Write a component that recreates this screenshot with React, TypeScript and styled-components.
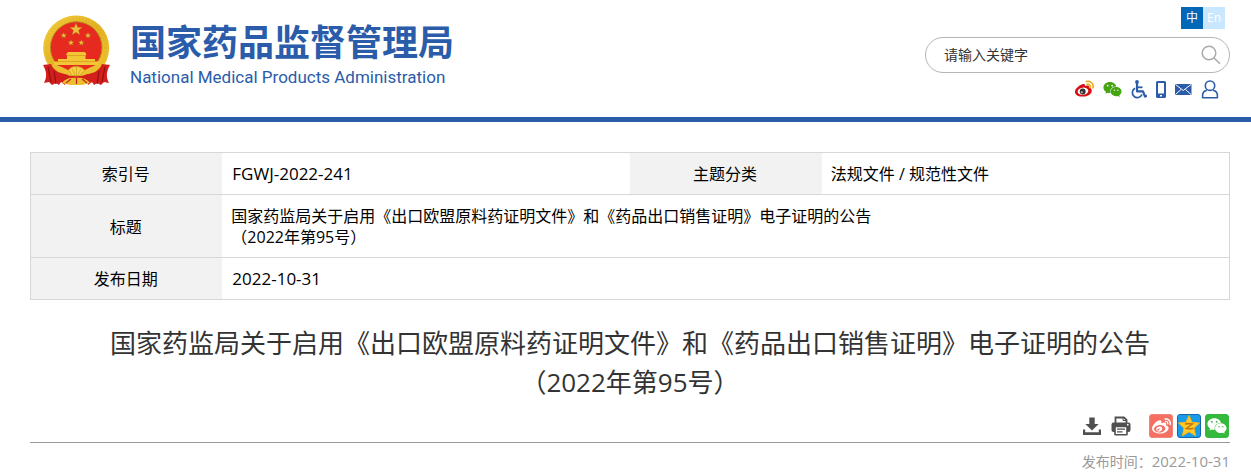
import React from "react";
import styled, { createGlobalStyle } from "styled-components";
import { FaWeibo, FaWeixin } from "react-icons/fa";

const blue = "#2a5caa";
const cjk = '"Noto Sans CJK SC", sans-serif';

const GlobalStyle = createGlobalStyle`
  * { box-sizing: border-box; }
  body {
    margin: 0;
    background: #fff;
    color: #000;
    font: 16px/21px "Open Sans", ${cjk};
  }
  a { color: inherit; text-decoration: none; }
  svg { display: block; }
`;

const Header = styled.header`
  display: flex;
  justify-content: space-between;
  align-items: flex-start;
  min-height: 122px;
  padding: 7px 21px 0 42px;
  border-bottom: 5px solid ${blue};
`;

const Brand = styled.a`
  display: flex;
  gap: 19px;
  padding-top: 7px;
  color: ${blue};
`;

const BrandText = styled.div`
  display: flex;
  flex-direction: column;
`;

const BrandName = styled.span`
  font: bold 36px/52px ${cjk};
  white-space: nowrap;
`;

const BrandSub = styled.span`
  font: 17px/22px Roboto, sans-serif;
  white-space: nowrap;
`;

const Tools = styled.div`
  display: flex;
  flex-direction: column;
  align-items: flex-end;
  width: 305px;
`;

const Languages = styled.nav`
  display: flex;
  margin-right: 5px;
`;

const Language = styled.a<{ $active?: boolean }>`
  width: 22px;
  height: 22px;
  font-size: 12px;
  line-height: 22px;
  text-align: center;
  color: #fff;
  background: ${(p) => (p.$active ? "#0068b7" : "#c9e7ff")};
`;

const Search = styled.form`
  display: flex;
  align-items: center;
  width: 100%;
  height: 36px;
  margin-top: 8px;
  padding: 0 8px 0 18px;
  border: 1px solid #b5b5b5;
  border-radius: 18px;
`;

const SearchInput = styled.input`
  flex: 1;
  min-width: 0;
  padding: 0;
  border: 0;
  outline: 0;
  background: none;
  font: 14px/20px "Open Sans", ${cjk};
  color: #333;
  &::placeholder { color: #333; opacity: 1; }
`;

const IconButton = styled.button`
  padding: 0;
  border: 0;
  background: none;
  color: #505050;
  cursor: pointer;
`;

const QuickLinks = styled.nav`
  display: flex;
  align-items: center;
  gap: 9px;
  height: 20px;
  margin: 6px 11px 0 0;
  color: ${blue};
`;

const Main = styled.main`
  padding: 30px 21px 0 30px;
`;

const InfoTable = styled.table`
  width: 100%;
  table-layout: fixed;
  border-collapse: collapse;
  border: 1px solid #d7d7d7;
`;

const Label = styled.th`
  width: 16%;
  padding: 11px 11px 9px 9px;
  font-weight: normal;
  text-align: center;
  background: #f2f2f2;
  border-bottom: 1px solid #d7d7d7;
`;

const Value = styled.td<{ $code?: boolean }>`
  padding: ${(p) => (p.$code ? "10px" : "11px 11px 9px 9px")};
  font-size: ${(p) => (p.$code ? "17px" : "16px")};
  border-bottom: 1px solid #d7d7d7;
`;

const Title = styled.h1`
  margin: 24px 0 12px;
  font-size: 26px;
  line-height: 39px;
  font-weight: normal;
  text-align: center;
  color: #333;
`;

const Actions = styled.div`
  display: flex;
  justify-content: flex-end;
  align-items: center;
  gap: 9px;
  padding: 0 1px 4px 0;
  border-bottom: 1px solid #999;
`;

const ShareGroup = styled.div`
  display: flex;
  gap: 4px;
  margin-left: 9px;
`;

const Share = styled.button<{ $bg: string; $edge: string }>`
  display: flex;
  align-items: center;
  justify-content: center;
  width: 24px;
  height: 24px;
  padding: 0;
  border: 1px solid ${(p) => p.$edge};
  border-radius: 3px;
  color: #fff;
  background: ${(p) => p.$bg};
  cursor: pointer;
`;

const Published = styled.p`
  margin: 8px 0 0;
  font-size: 14px;
  line-height: 20px;
  text-align: right;
  color: #999;

  time { font-size: 15px; }
`;

const starPoints = (cx: number, cy: number, r: number) =>
  Array.from({ length: 10 }, (_, i) => {
    const a = (Math.PI / 5) * i - Math.PI / 2;
    const d = i % 2 ? r * 0.42 : r;
    return `${(cx + d * Math.cos(a)).toFixed(2)},${(cy + d * Math.sin(a)).toFixed(2)}`;
  }).join(" ");

const Emblem = () => (
  <svg width="69" height="72" viewBox="0 0 69 72" aria-hidden="true">
    <defs>
      <linearGradient id="gold" x1="0" y1="0" x2="1" y2="1">
        <stop offset="0" stopColor="#f3cf3c" />
        <stop offset="0.5" stopColor="#e3b224" />
        <stop offset="1" stopColor="#f0c832" />
      </linearGradient>
    </defs>
    <ellipse cx="34.2" cy="34" rx="33" ry="32.6" fill="url(#gold)" />
    <ellipse cx="34.2" cy="34" rx="29.5" ry="29" fill="none" stroke="#d09c1c" strokeWidth="3" strokeDasharray="1 2.2" opacity="0.25" />
    <circle cx="34.2" cy="33.500" r="25.800" fill="#e62a20" stroke="#b98a1c" strokeWidth="1" />
    <g fill="#eec03a" stroke="#a97520" strokeWidth="0.3">
      <polygon points={starPoints(34, 15.500, 6.4)} />
      <polygon points={starPoints(21.7, 21.500, 3.1)} />
      <polygon points={starPoints(46, 21.500, 3.1)} />
      <polygon points={starPoints(29, 28.800, 3.1)} />
      <polygon points={starPoints(39.300, 28.800, 3.1)} />
    </g>
    <path d="M26 38h17l1.500 2.500-1 1V45H53v2.500h4V51H12v-3.500h4V45h9v-3.500l-1-1z" fill="#f2c634" />
    <path d="M25 41.500h18.500M16 47.500h37" stroke="#d99a20" strokeWidth="0.8" />
    <path d="M10 51c7 0 12 3 16 5 5-3 12-3 17 0 4-2 9-5 16-5-3 6-10 10-16 9-5 4-12 4-17 0-6 1-13-3-16-9z" fill="#edbf30" />
    <path d="M1 51l8-1c2 5 6 8 10 9l7 2-3 10-4-3-2 3-3-2-4 2-3-3-5 1c3-6 3-11-1-18z" fill="#d31f1c" />
    <path d="M68 51l-8-1c-2 5-6 8-10 9l-7 2 3 10 4-3 2 3 3-2 4 2 3-3 5 1c-3-6-3-11 1-18z" fill="#d31f1c" />
    <path d="M6 53l3 15M12 57l2 13M63 53l-3 15M57 57l-2 13" stroke="#92100f" strokeWidth="1.200" />
    <path d="M22 60c7 3 17 3 24 0l-1 6H24z" fill="#d31f1c" />
    <path d="M20 69c3-4 8-6 14-5 6-1 11 1 14 5l-8 2h-12z" fill="#edbf30" />
    <path d="M24 69l5-4M45 69l-5-4M34.500 64v6" stroke="#c3281b" strokeWidth="1.300" />
    <path d="M27 56.500c0-2 3-4 7-4s8 2 8 4L38 61.500h-8z" fill="#f4d142" stroke="#cf9a22" strokeWidth="0.700" />
    <path d="M34.500 53v8M30 55l3 6M39 55l-3 6" stroke="#cf9a22" strokeWidth="0.700" />
  </svg>
);

const SearchIcon = () => (
  <svg width="20" height="20" viewBox="0 0 20 20" fill="none" stroke="#aaa" strokeWidth="1.500">
    <circle cx="8" cy="8" r="6.800" />
    <path d="M13 13l6 5.800" />
  </svg>
);

const WeiboIcon = () => (
  <svg width="19" height="18" viewBox="0 0 19.5 18" aria-hidden="true">
    <path d="M7.500 4.200c1.900-.9 3.200-.2 2.800 1.800 2-.8 4.500-.8 4.200 1.500 1.700.5 2.700 1.600 2.700 3.300 0 3.300-4.200 6-9 6S0 15 0 11.700c0-3 4.500-6.600 7.500-7.500z" fill="#d90e14" />
    <ellipse cx="8.200" cy="11.300" rx="5.500" ry="3.700" fill="#fff" transform="rotate(-8 8 11.400)" />
    <circle cx="7.900" cy="11.600" r="3" fill="#333" />
    <circle cx="7" cy="12.300" r="1.100" fill="#bbb" />
    <path d="M11.800 1.300c4.200-1 7.800 2.200 6.600 6.500M12.500 4.300c2-.4 3.500.9 3 3" fill="none" stroke="#eeaa14" strokeWidth="1.700" strokeLinecap="round" />
  </svg>
);

const WheelchairIcon = () => (
  <svg width="16" height="19" viewBox="0 0 16 19" fill="none" stroke="currentColor" aria-hidden="true">
    <circle cx="6" cy="1.900" r="1.900" fill="currentColor" stroke="none" />
    <path d="M6 3v8.300h6l2 5.200 2-.7" strokeWidth="2.200" strokeLinejoin="round" />
    <path d="M6.500 7.300h5" strokeWidth="1.800" />
    <path d="M4 8.200A5 5 0 1 0 11 14.500" strokeWidth="1.700" />
  </svg>
);

const PhoneIcon = () => (
  <svg width="10" height="17" viewBox="0 0 10 17" aria-hidden="true">
    <path fillRule="evenodd" d="M1.500 0h7A1.500 1.500 0 0 1 10 1.500v14A1.500 1.500 0 0 1 8.500 17h-7A1.500 1.500 0 0 1 0 15.500v-14A1.500 1.500 0 0 1 1.500 0zM2 2v10.500h6V2zM4 14v1.500h2V14z" fill="currentColor" />
  </svg>
);

const MailIcon = () => (
  <svg width="17" height="11" viewBox="0 0 17 11" aria-hidden="true">
    <rect width="16.500" height="11" rx="0.500" fill="currentColor" />
    <path d="M.5.5l7.750 6L16 .5M.5 10.500l5.500-5M16 10.500l-5.500-5" fill="none" stroke="#fff" strokeWidth="1" />
  </svg>
);

const UserIcon = () => (
  <svg width="18" height="19" viewBox="0 0 18 19" fill="none" stroke="currentColor" strokeWidth="1.600" aria-hidden="true">
    <circle cx="9" cy="5.700" r="4.700" />
    <path d="M5.800 10.300c-2.500.7-4.200 2.600-4.200 4.900v2.500h14.800v-2.500c0-2.300-1.700-4.200-4.200-4.900" strokeLinejoin="round" />
  </svg>
);

const DownloadIcon = () => (
  <svg width="20" height="20" viewBox="0 0 20 20" fill="currentColor">
    <path d="M7.300 1.500h5.400V8h4L10 14.500 3.300 8h4z" />
    <path d="M1 13.500h2.200v2.800h13.600v-2.800H19V19H1z" />
  </svg>
);

const PrintIcon = () => (
  <svg width="20" height="20" viewBox="0 0 20 20">
    <path d="M4.500 7V1.500h8.500l2.500 2.300V7" fill="#fff" stroke="currentColor" strokeWidth="1.800" />
    <path d="M12 1.500v3h3.500" fill="none" stroke="currentColor" />
    <rect x="0.500" y="6.500" width="19" height="9.500" rx="2" fill="currentColor" />
    <rect x="4" y="10.500" width="12" height="8.300" rx="0.500" fill="#fff" stroke="currentColor" strokeWidth="1.600" />
    <path d="M6 13.200h8M6 15.800h5.500" stroke="currentColor" strokeWidth="1.300" />
    <circle cx="16.800" cy="8.700" r="0.900" fill="#fff" />
  </svg>
);

const QzoneIcon = () => (
  <svg width="22" height="22" viewBox="0 0 22 22">
    <polygon points="11,0.500 14,7.300 21.500,8 16,13 17.600,20.800 11,16.800 4.400,20.800 6,13 0.500,8 8,7.300" fill="#ffc928" stroke="#f7b51c" strokeWidth="1" strokeLinejoin="round" />
    <path d="M7 9c2.500-.5 5-.5 7.500 0L8.500 13.500c2 .5 4.500.5 7-.2" fill="none" stroke="#c57412" strokeWidth="1.500" />
  </svg>
);

export default function App() {
  return (
    <>
      <GlobalStyle />
      <Header>
        <Brand href="#">
          <Emblem />
          <BrandText>
            <BrandName>国家药品监督管理局</BrandName>
            <BrandSub>National Medical Products Administration</BrandSub>
          </BrandText>
        </Brand>
        <Tools>
          <Languages aria-label="语言">
            <Language href="#" $active>中</Language>
            <Language href="#">En</Language>
          </Languages>
          <Search role="search" onSubmit={(e) => e.preventDefault()}>
            <SearchInput type="text" aria-label="请输入关键字" placeholder="请输入关键字" />
            <IconButton type="submit" aria-label="搜索"><SearchIcon /></IconButton>
          </Search>
          <QuickLinks aria-label="快捷入口">
            <a href="#" aria-label="微博"><WeiboIcon /></a>
            <a href="#" aria-label="微信"><FaWeixin size={19} color="#44a510" /></a>
            <a href="#" aria-label="无障碍"><WheelchairIcon /></a>
            <a href="#" aria-label="手机版"><PhoneIcon /></a>
            <a href="#" aria-label="邮箱"><MailIcon /></a>
            <a href="#" aria-label="个人中心"><UserIcon /></a>
          </QuickLinks>
        </Tools>
      </Header>
      <Main>
        <InfoTable>
          <tbody>
            <tr>
              <Label scope="row">索引号</Label>
              <Value $code>FGWJ-2022-241</Value>
              <Label scope="row">主题分类</Label>
              <Value>法规文件 / 规范性文件</Value>
            </tr>
            <tr>
              <Label scope="row">标题</Label>
              <Value colSpan={3}>
                国家药监局关于启用《出口欧盟原料药证明文件》和《药品出口销售证明》电子证明的公告
                <br />
                （2022年第95号）
              </Value>
            </tr>
            <tr>
              <Label scope="row">发布日期</Label>
              <Value colSpan={3} $code>2022-10-31</Value>
            </tr>
          </tbody>
        </InfoTable>
        <Title>
          国家药监局关于启用《出口欧盟原料药证明文件》和《药品出口销售证明》电子证明的公告
          <br />
          （2022年第95号）
        </Title>
        <Actions>
          <IconButton type="button" aria-label="下载"><DownloadIcon /></IconButton>
          <IconButton type="button" aria-label="打印"><PrintIcon /></IconButton>
          <ShareGroup>
            <Share type="button" aria-label="分享到微博" $bg="#f56f63" $edge="#f0857b"><FaWeibo size={19} /></Share>
            <Share type="button" aria-label="分享到QQ空间" $bg="#1a9be8" $edge="#1467ad"><QzoneIcon /></Share>
            <Share type="button" aria-label="分享到微信" $bg="#35b93c" $edge="#35b93c"><FaWeixin size={20} /></Share>
          </ShareGroup>
        </Actions>
        <Published>发布时间：<time dateTime="2022-10-31">2022-10-31</time></Published>
      </Main>
    </>
  );
}
